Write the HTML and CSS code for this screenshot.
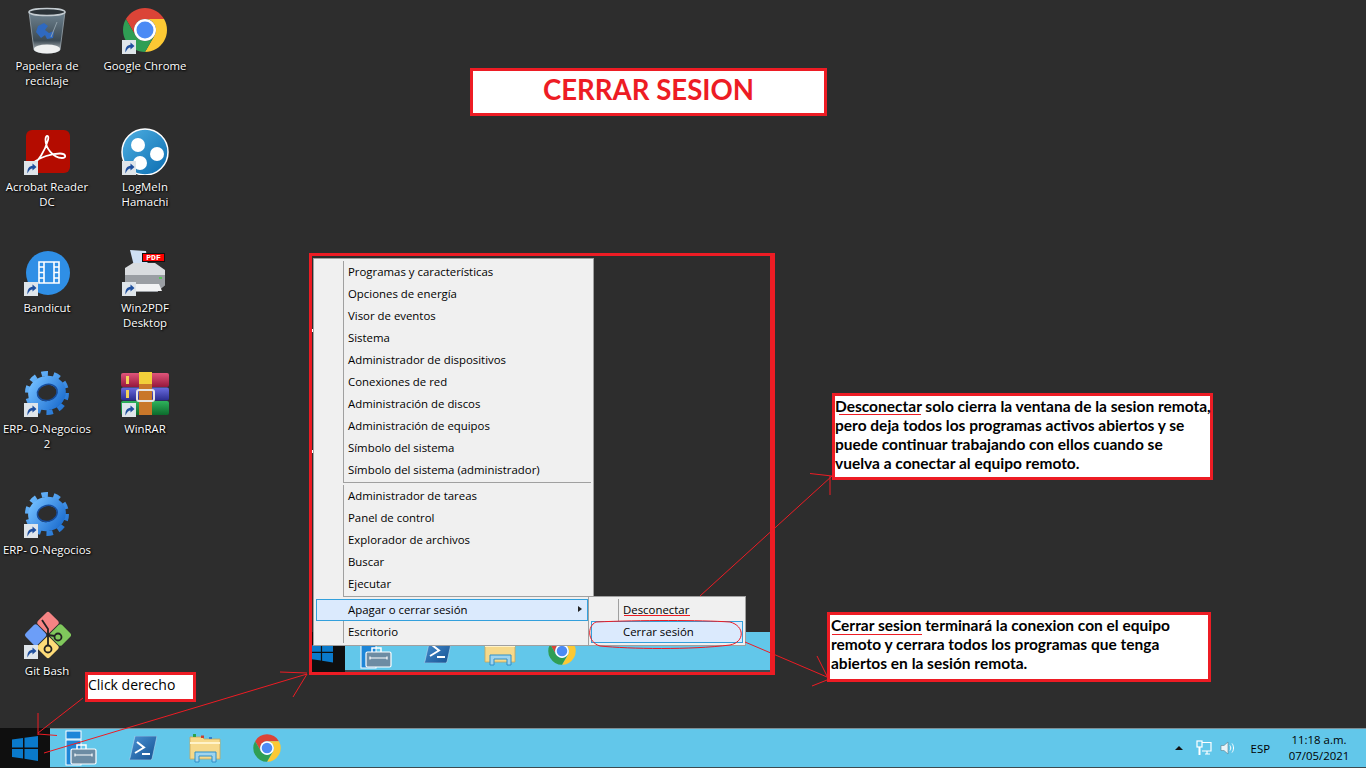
FILE: index.html
```html
<!DOCTYPE html>
<html lang="es">
<head>
    <meta charset="UTF-8">
    <meta name="viewport" content="width=device-width, initial-scale=1.0">
    <title>Cerrar sesion</title>
    <link rel="stylesheet" href="styles.css">
</head>
<body>
    <svg class="defs" width="0" height="0">
        <defs>
            <linearGradient id="blueball" x1="0" y1="0" x2="1" y2="1">
                <stop offset="0" stop-color="#4fb0e2"/>
                <stop offset="1" stop-color="#0a6cb0"/>
            </linearGradient>
            <linearGradient id="gearblue" x1="0" y1="0" x2="1" y2="1">
                <stop offset="0" stop-color="#6fbcff"/>
                <stop offset="1" stop-color="#1e6fd0"/>
            </linearGradient>
            <linearGradient id="psblue" x1="0" y1="0" x2="1" y2="1">
                <stop offset="0" stop-color="#4a93d6"/>
                <stop offset="1" stop-color="#14508f"/>
            </linearGradient>
            <linearGradient id="glass" x1="0" y1="0" x2="0" y2="1">
                <stop offset="0" stop-color="#6f8390"/>
                <stop offset="0.7" stop-color="#3c4a54"/>
                <stop offset="1" stop-color="#d8dcdd"/>
            </linearGradient>
            <linearGradient id="rarred" x1="0" y1="0" x2="0" y2="1">
                <stop offset="0" stop-color="#e0557a"/>
                <stop offset="1" stop-color="#96183c"/>
            </linearGradient>
            <linearGradient id="rarblue" x1="0" y1="0" x2="0" y2="1">
                <stop offset="0" stop-color="#6a6ce0"/>
                <stop offset="1" stop-color="#2a2c8e"/>
            </linearGradient>
            <linearGradient id="rargreen" x1="0" y1="0" x2="0" y2="1">
                <stop offset="0" stop-color="#2fb35c"/>
                <stop offset="1" stop-color="#0c6a2c"/>
            </linearGradient>
            <symbol id="shortcut" viewBox="0 0 14 14">
                <rect width="14" height="14" fill="#dfe5ea"/>
                <path d="M3.5 12.5C3 8 5 5 8.5 4.8V2.5L12.5 6 8.5 9.5V7.4C6.5 7.4 5 9 3.5 12.5Z" fill="#1f4f9e"/>
            </symbol>
            <symbol id="chrome" viewBox="0 0 48 48">
                <path d="M4.95 13A22 22 0 0 1 43.05 13H24A11 11 0 0 0 14.47 29.5Z" fill="#db4437"/>
                <path d="M43.05 13A22 22 0 0 1 24 46L33.53 29.5A11 11 0 0 0 24 13Z" fill="#fcc934"/>
                <path d="M24 46A22 22 0 0 1 4.95 13L14.47 29.5A11 11 0 0 0 33.53 29.5Z" fill="#2f9e54"/>
                <circle cx="24" cy="24" r="11" fill="#fff"/>
                <circle cx="24" cy="24" r="8.5" fill="#4c8bf5"/>
            </symbol>
            <symbol id="win" viewBox="0 0 26 25">
                <path d="M0 3.5 11 2V11.5H0ZM12.5 1.8 26 0V11.5H12.5ZM0 13H11V22.5L0 21ZM12.5 13H26V25L12.5 22.8Z" fill="#0a7acb"/>
            </symbol>
            <symbol id="server" viewBox="0 0 32 36">
                <rect x="1" y="1" width="15" height="8" fill="#1d86d8" stroke="#fff" stroke-width="1"/>
                <rect x="1" y="10" width="15" height="25" fill="#1d86d8" stroke="#fff" stroke-width="1"/>
                <path d="M12 19V15H21V19" fill="none" stroke="#fff" stroke-width="1.5"/>
                <rect x="6" y="19" width="25" height="15" rx="1.5" fill="#6d8ca3" stroke="#fff" stroke-width="1.2"/>
                <path d="M10 25H27M10 23.5V26.5M27 23.5V26.5" stroke="#fff" stroke-width="1.2"/>
            </symbol>
            <symbol id="ps" viewBox="0 0 28 24">
                <path d="M6 0H28L23 23 21.5 24H0L1 22Z" fill="url(#psblue)" stroke="#b7d7ee" stroke-width="0.6"/>
                <path d="M8 6 15 11.5 6 17" fill="none" stroke="#fff" stroke-width="2"/>
                <path d="M13 18H21" stroke="#fff" stroke-width="2"/>
            </symbol>
            <symbol id="folder" viewBox="0 0 32 30">
                <path d="M1 4H13L15 6H31V26H1Z" fill="#f6d98b" stroke="#c9a75a" stroke-width="0.8"/>
                <rect x="4" y="1" width="3" height="3" fill="#2aa34a"/>
                <rect x="12" y="2.500" width="3" height="2.500" fill="#c8402f"/>
                <rect x="20" y="4" width="3" height="2" fill="#3a80c9"/>
                <path d="M1 10H31" stroke="#fff3c9" stroke-width="2"/>
                <path d="M6 29V19H27V29H23V23H10V29Z" fill="#9fd4ee" stroke="#2f8fc9" stroke-width="1"/>
            </symbol>
            <symbol id="gear" viewBox="0 0 48 48">
                <circle cx="24" cy="24" r="19.500" fill="none" stroke="url(#gearblue)" stroke-width="5" stroke-dasharray="6.500 5.750"/>
                <ellipse cx="24" cy="24" rx="14.500" ry="12.500" fill="none" stroke="url(#gearblue)" stroke-width="9" transform="rotate(-15 24 24)"/>
                <ellipse cx="24.500" cy="23.500" rx="10" ry="8" fill="none" stroke="#164c9c" stroke-width="1.500" transform="rotate(-15 24 24)"/>
            </symbol>
        </defs>
    </svg>

    <div class="screen">
        <main class="desktop">
            <div class="icon-cols">
                <div class="icon-col first">
                    <div class="desk-icon">
                        <div class="pic">
                            <svg viewBox="0 0 48 48" width="48" height="48">
                                <path d="M6 6 11 44C14 48 34 48 37 44L42 6Z" fill="url(#glass)" stroke="#9aa6ad" stroke-width="0.8"/>
                                <ellipse cx="24" cy="6" rx="18" ry="3.500" fill="#2b3338" stroke="#c4ccd1" stroke-width="1.500"/>
                                <path d="M15 20 21 17 25 20 22 24 26 27 31 25 30 32 24 33 22 29 18 32 13 26Z" fill="#2f69c0"/>
                                <path d="M34 16 28 31" stroke="#90a0aa" stroke-width="1"/>
                                <ellipse cx="24" cy="43" rx="13" ry="4.500" fill="#eef0f0"/>
                            </svg>
                        </div>
                        <div class="label">Papelera de<br>reciclaje</div>
                    </div>
                    <div class="desk-icon">
                        <div class="pic">
                            <svg viewBox="0 0 48 48" width="48" height="48">
                                <rect x="3" y="3" width="44" height="43" rx="6" fill="#b40c00"/>
                                <path d="M9 38C15 35 22 24 25 13 26.500 7.500 22.500 7.500 22.500 12.500 22.500 21 30 31 39 31 44 31 43 26.500 37 26.500 29 26.500 17 30 10 36 8 38 8 39 9 38Z" fill="none" stroke="#fff" stroke-width="1.800"/>
                            </svg>
                            <svg class="badge"><use href="#shortcut"/></svg>
                        </div>
                        <div class="label">Acrobat Reader<br>DC</div>
                    </div>
                    <div class="desk-icon">
                        <div class="pic">
                            <svg viewBox="0 0 48 48" width="48" height="48">
                                <circle cx="25" cy="25" r="22" fill="#2f8fe6"/>
                                <path d="M16 14H36V35H16ZM21 14V35M31 14V35M16 19H21M16 24.500H21M16 30H21M31 19H36M31 24.500H36M31 30H36" fill="none" stroke="#fff" stroke-width="1.600"/>
                            </svg>
                            <svg class="badge"><use href="#shortcut"/></svg>
                        </div>
                        <div class="label">Bandicut</div>
                    </div>
                    <div class="desk-icon">
                        <div class="pic">
                            <svg width="48" height="48"><use href="#gear"/></svg>
                            <svg class="badge"><use href="#shortcut"/></svg>
                        </div>
                        <div class="label">ERP- O-Negocios<br>2</div>
                    </div>
                    <div class="desk-icon">
                        <div class="pic">
                            <svg width="48" height="48"><use href="#gear"/></svg>
                            <svg class="badge"><use href="#shortcut"/></svg>
                        </div>
                        <div class="label">ERP- O-Negocios</div>
                    </div>
                    <div class="desk-icon">
                        <div class="pic">
                            <svg viewBox="0 0 48 48" width="48" height="48">
                                <g transform="rotate(45 25 24)">
                                    <rect x="8" y="7" width="16.500" height="16.500" rx="2.500" fill="#f58484"/>
                                    <rect x="25.500" y="7" width="16.500" height="16.500" rx="2.500" fill="#80c85c"/>
                                    <rect x="25.500" y="24.500" width="16.500" height="16.500" rx="2.500" fill="#fddb78"/>
                                    <rect x="8" y="24.500" width="16.500" height="16.500" rx="2.500" fill="#6c9ef8"/>
                                </g>
                                <path d="M19 9 25 18V36M25 24 32 25" stroke="#222" stroke-width="1.800" fill="none"/>
                                <circle cx="35" cy="26" r="3.500" fill="#80c85c" stroke="#222" stroke-width="1.800"/>
                                <circle cx="25" cy="38" r="3.500" fill="#fddb78" stroke="#222" stroke-width="1.800"/>
                            </svg>
                            <svg class="badge"><use href="#shortcut"/></svg>
                        </div>
                        <div class="label">Git Bash</div>
                    </div>
                </div>
                <div class="icon-col">
                    <div class="desk-icon">
                        <div class="pic">
                            <svg width="48" height="48"><use href="#chrome"/></svg>
                            <svg class="badge"><use href="#shortcut"/></svg>
                        </div>
                        <div class="label">Google Chrome</div>
                    </div>
                    <div class="desk-icon">
                        <div class="pic">
                            <svg viewBox="0 0 48 48" width="48" height="48">
                                <circle cx="24" cy="25" r="23" fill="url(#blueball)" stroke="#fff" stroke-width="1.500"/>
                                <circle cx="17" cy="18" r="7" fill="#fff"/>
                                <circle cx="36" cy="27" r="7" fill="#fff"/>
                                <circle cx="19" cy="36" r="7" fill="#fff"/>
                            </svg>
                            <svg class="badge"><use href="#shortcut"/></svg>
                        </div>
                        <div class="label">LogMeIn<br>Hamachi</div>
                    </div>
                    <div class="desk-icon">
                        <div class="pic">
                            <svg viewBox="0 0 48 48" width="48" height="48">
                                <path d="M9 2 25 3 27 18H13Z" fill="#cfe0f5"/>
                                <path d="M4 20 12 15H34L44 22V37L36 44H12L4 36Z" fill="#d9dcdf"/>
                                <path d="M4 27H44V37L36 44H12L4 36Z" fill="#9a9ea3"/>
                                <path d="M14 36H38L41 43H12Z" fill="#f2f3f4"/>
                                <rect x="38" y="29" width="3" height="2" fill="#57c45a"/>
                            </svg>
                            <span class="pdf-tag">PDF</span>
                            <svg class="badge"><use href="#shortcut"/></svg>
                        </div>
                        <div class="label">Win2PDF<br>Desktop</div>
                    </div>
                    <div class="desk-icon">
                        <div class="pic">
                            <svg viewBox="0 0 48 48" width="48" height="48">
                                <rect x="0" y="4" width="48" height="14" rx="2" fill="url(#rarred)"/>
                                <rect x="0" y="18.500" width="48" height="13" rx="2" fill="url(#rarblue)"/>
                                <rect x="0" y="32" width="48" height="14" rx="2" fill="url(#rargreen)"/>
                                <rect x="5" y="7" width="3" height="8" fill="#f3d35a"/>
                                <rect x="5" y="21" width="3" height="8" fill="#f3d35a"/>
                                <rect x="18" y="3" width="13" height="12" fill="#f2cf3a"/>
                                <rect x="18" y="15" width="13" height="31" fill="#c9772a"/>
                                <rect x="16" y="21" width="17" height="11" rx="2" fill="none" stroke="#e5e5e5" stroke-width="2"/>
                            </svg>
                            <svg class="badge"><use href="#shortcut"/></svg>
                        </div>
                        <div class="label">WinRAR</div>
                    </div>
                </div>
            </div>

            <h1 class="title-box">CERRAR SESION</h1>

            <section class="shot-frame">
                <div class="mini-bar">
                    <div class="mini-start"><svg width="26" height="25"><use href="#win"/></svg></div>
                    <div class="bar-item"><svg width="32" height="36"><use href="#server"/></svg></div>
                    <div class="bar-item"><svg width="28" height="24"><use href="#ps"/></svg></div>
                    <div class="bar-item"><svg width="32" height="30"><use href="#folder"/></svg></div>
                    <div class="bar-item"><svg width="30" height="30"><use href="#chrome"/></svg></div>
                </div>
                <div class="menu">
                    <ul class="menu-group">
                        <li>Programas y características</li>
                        <li>Opciones de energía</li>
                        <li>Visor de eventos</li>
                        <li>Sistema</li>
                        <li>Administrador de dispositivos</li>
                        <li>Conexiones de red</li>
                        <li>Administración de discos</li>
                        <li>Administración de equipos</li>
                        <li>Símbolo del sistema</li>
                        <li>Símbolo del sistema (administrador)</li>
                    </ul>
                    <ul class="menu-group">
                        <li>Administrador de tareas</li>
                        <li>Panel de control</li>
                        <li>Explorador de archivos</li>
                        <li>Buscar</li>
                        <li>Ejecutar</li>
                    </ul>
                    <ul class="menu-group last">
                        <li class="active">Apagar o cerrar sesión<span class="caret"></span></li>
                        <li>Escritorio</li>
                    </ul>
                    <ul class="submenu">
                        <li>Desconectar</li>
                        <li class="active">Cerrar sesión</li>
                    </ul>
                </div>
            </section>

            <p class="note note-click">Click derecho</p>
            <p class="note note-bold note-disconnect">Desconectar solo cierra la ventana de la sesion remota,<br>pero deja todos los programas activos abiertos y se<br>puede continuar trabajando con ellos cuando se<br>vuelva a conectar al equipo remoto.</p>
            <p class="note note-bold note-close">Cerrar sesion terminará la conexion con el equipo<br>remoto y cerrara todos los programas que tenga<br>abiertos en la sesión remota.</p>
        </main>

        <footer class="taskbar">
            <div class="start"><svg width="26" height="25"><use href="#win"/></svg></div>
            <div class="bar-item"><svg width="32" height="36"><use href="#server"/></svg></div>
            <div class="bar-item"><svg width="28" height="24"><use href="#ps"/></svg></div>
            <div class="bar-item"><svg width="32" height="30"><use href="#folder"/></svg></div>
            <div class="bar-item"><svg width="30" height="30"><use href="#chrome"/></svg></div>
            <div class="tray">
                <span class="tray-up"></span>
                <svg class="tray-net" viewBox="0 0 16 16" width="16" height="16">
                    <path d="M6 2.500H15V11H6M9 14H14M11 11V14" fill="none" stroke="#fff" stroke-width="1.200"/>
                    <rect x="1" y="1" width="5" height="6" fill="none" stroke="#fff" stroke-width="1.200"/>
                    <path d="M3.500 7V15" stroke="#fff" stroke-width="2"/>
                </svg>
                <svg class="tray-vol" viewBox="0 0 16 16" width="16" height="16">
                    <path d="M1 5.500H4L8 2V14L4 10.500H1Z" fill="#e8f4f8" stroke="#5d7f8f" stroke-width="0.600"/>
                    <path d="M10 5.500C11 7 11 9 10 10.500M12 3.500C14 6 14 10 12 12.500" fill="none" stroke="#fff" stroke-width="1"/>
                </svg>
                <span class="lang">ESP</span>
                <div class="clock">
                    <span>11:18 a.m.</span>
                    <span>07/05/2021</span>
                </div>
            </div>
        </footer>

        <!-- red pen marks drawn over the screenshot -->
        <svg class="marks" viewBox="0 0 1366 768" width="1366" height="768">
            <g fill="none" stroke="#ed1c24" stroke-width="1">
                <path d="M83 698 38 733M38 713V735M38 734 57 735.500"/>
                <path d="M44 753 307 674M280 672 307 673M293 697 307 674"/>
                <path d="M700 596 832 476M810 473.500 832 476M830 476V495"/>
                <path d="M745 642 827 677M817 656 827 676M812 686 827 680"/>
                <path d="M596 622C640 620 700 620 730 622 745 626 745 642 730 645 690 650 630 649 600 646 587 642 587 626 596 622Z"/>
            </g>
            <g stroke="#ed1c24" stroke-width="1.200">
                <path d="M624 615.500H690M839 414.500H921M832 634.500H922"/>
            </g>
            <g fill="#fff">
                <rect x="312" y="329" width="1" height="3"/>
                <rect x="312" y="450" width="1" height="3"/>
            </g>
        </svg>
    </div>
</body>
</html>
```

FILE: styles.css
```css
html, body {
    margin: 0;
    padding: 0;
}
body {
    width: 1366px;
    height: 768px;
    overflow: hidden;
    background-color: #2d2d2d;
    font-family: "Open Sans", "Noto Sans", sans-serif;
}
.defs {
    position: absolute;
}
svg {
    display: block;
}
.screen {
    position: relative;
    display: flex;
    flex-direction: column;
    width: 1366px;
    height: 768px;
}
.desktop {
    position: relative;
    flex: 1;
    min-height: 0;
}
.marks {
    position: absolute;
    left: 0;
    top: 0;
    z-index: 5;
    pointer-events: none;
}

/* desktop icons */
.icon-cols {
    display: flex;
    gap: 2px;
    padding-top: 6px;
}
.icon-col {
    width: 98px;
}
.icon-col.first {
    width: 94px;
}
.desk-icon {
    height: 121px;
    display: flex;
    flex-direction: column;
    align-items: center;
}
.pic {
    position: relative;
    width: 48px;
    height: 48px;
}
.badge {
    position: absolute;
    left: 1px;
    bottom: 0;
    width: 14px;
    height: 14px;
}
.pdf-tag {
    position: absolute;
    top: 5px;
    left: 21px;
    width: 23px;
    height: 9px;
    background-color: #f00;
    border: 1px solid #111;
    box-sizing: border-box;
    color: #fff;
    font-family: "Liberation Mono", monospace;
    font-size: 8px;
    font-weight: bold;
    line-height: 7px;
    text-align: center;
}
.label {
    margin-top: 4px;
    color: #fff;
    font-size: 11.4px;
    line-height: 15px;
    text-align: center;
    white-space: nowrap;
    text-shadow: 1px 1px 2px #000, 0 0 2px #000;
}

/* annotations */
.title-box {
    position: absolute;
    left: 470px;
    top: 68px;
    width: 357px;
    height: 48px;
    margin: 0;
    box-sizing: border-box;
    border: 3px solid #ed1c24;
    background-color: #fff;
    color: #ed1c24;
    font-family: Lato, sans-serif;
    font-size: 27.6px;
    font-weight: bold;
    line-height: 38px;
    text-align: center;
}
.note {
    position: absolute;
    margin: 0;
    box-sizing: border-box;
    border: 3px solid #ed1c24;
    background-color: #fff;
    color: #000;
}
.note-click {
    left: 85px;
    top: 672px;
    width: 111px;
    height: 30px;
    padding: 0;
    font-size: 14px;
    line-height: 19px;
}
.note-bold {
    font-family: Lato, sans-serif;
    font-size: 15.5px;
    font-weight: bold;
    line-height: 19px;
    white-space: nowrap;
}
.note-disconnect {
    left: 832px;
    top: 393px;
    width: 381px;
    height: 87px;
    padding: 1px 0 0 0;
}
.note-close {
    left: 827px;
    top: 612px;
    width: 384px;
    height: 70px;
    padding: 1px 0 0 1px;
}

/* framed screenshot with the context menu */
.shot-frame {
    position: absolute;
    left: 309px;
    top: 253px;
    width: 466px;
    height: 422px;
    box-sizing: border-box;
    border: solid #ed1c24;
    border-width: 3px 5px 3px 3px;
    padding: 2px 0 0 1px;
    background-color: #2d2d2d;
}
.mini-bar {
    position: absolute;
    left: 0;
    right: 0;
    bottom: 0;
    height: 40px;
    display: flex;
    box-sizing: border-box;
    border-bottom: 2px solid #3c4a50;
    background-color: #62c7ea;
}
.mini-start {
    width: 33px;
    height: 40px;
    background-color: #0f0f0f;
    display: flex;
    justify-content: flex-end;
    align-items: center;
    padding-right: 12px;
    box-sizing: border-box;
    overflow: hidden;
    margin-bottom: -2px;
    flex: none;
}
.menu {
    position: relative;
    z-index: 1;
    width: 281px;
    box-sizing: border-box;
    border: 1px solid #a0a0a0;
    background-color: #f0f0f0;
    color: #000;
    font-size: 11.4px;
    padding: 2px 0;
}
.menu ul {
    list-style: none;
    margin: 0;
    padding: 0;
}
.menu .menu-group {
    margin: 0 2px 2px 29px;
    padding-bottom: 1px;
    border-left: 1px solid #a0a0a0;
    border-bottom: 1px solid #a0a0a0;
}
.menu .menu-group.last {
    border-bottom: 0;
    margin-bottom: 0;
    padding-bottom: 0;
}
.menu-group li {
    height: 22px;
    line-height: 22px;
    padding-left: 4px;
    white-space: nowrap;
}
.menu-group li.active {
    position: relative;
    margin-left: -28px;
    margin-right: 3px;
    padding-left: 31px;
    height: 20px;
    line-height: 20px;
    background-color: #dbeafd;
    border: 1px solid #33a0dc;
}
.caret {
    position: absolute;
    right: 5px;
    top: 6px;
    border-left: 4px solid #222;
    border-top: 3.500px solid transparent;
    border-bottom: 3.500px solid transparent;
}
.menu .submenu {
    position: absolute;
    left: 274px;
    bottom: -1px;
    width: 158px;
    height: 50px;
    box-sizing: border-box;
    border: 1px solid #a0a0a0;
    background-color: #f0f0f0;
    padding: 2px 2px 0;
}
.submenu li {
    height: 22px;
    line-height: 22px;
    padding-left: 32px;
    box-sizing: border-box;
    background-image: linear-gradient(#a0a0a0, #a0a0a0);
    background-repeat: no-repeat;
    background-size: 1px 100%;
    background-position: 27px 0;
}
.submenu li.active {
    background-color: #dbeafd;
    background-image: none;
    border: 1px solid #33a0dc;
    line-height: 20px;
    padding-left: 31px;
}

/* taskbar */
.taskbar {
    display: flex;
    flex: none;
    height: 40px;
    box-sizing: border-box;
    border-top: 1px solid #7d8f96;
    border-bottom: 1px solid #3c4a50;
    background-color: #62c7ea;
    color: #000;
}
.start {
    width: 50px;
    margin: -1px 0;
    background-color: #0f0f0f;
    display: flex;
    align-items: center;
    justify-content: center;
    flex: none;
}
.bar-item {
    width: 62px;
    display: flex;
    align-items: center;
    justify-content: center;
    flex: none;
}
.tray {
    margin-left: auto;
    padding-right: 10px;
    display: flex;
    align-items: center;
    font-size: 11.4px;
}
.tray-up {
    width: 0;
    height: 0;
    margin-right: 13px;
    border-left: 4px solid transparent;
    border-right: 4px solid transparent;
    border-bottom: 4px solid #111;
}
.tray-net {
    margin-right: 8px;
}
.tray-vol {
    margin-right: 15px;
}
.lang {
    margin-right: 12px;
}
.clock {
    display: flex;
    flex-direction: column;
    align-items: center;
    width: 74px;
    line-height: 16px;
}
```
